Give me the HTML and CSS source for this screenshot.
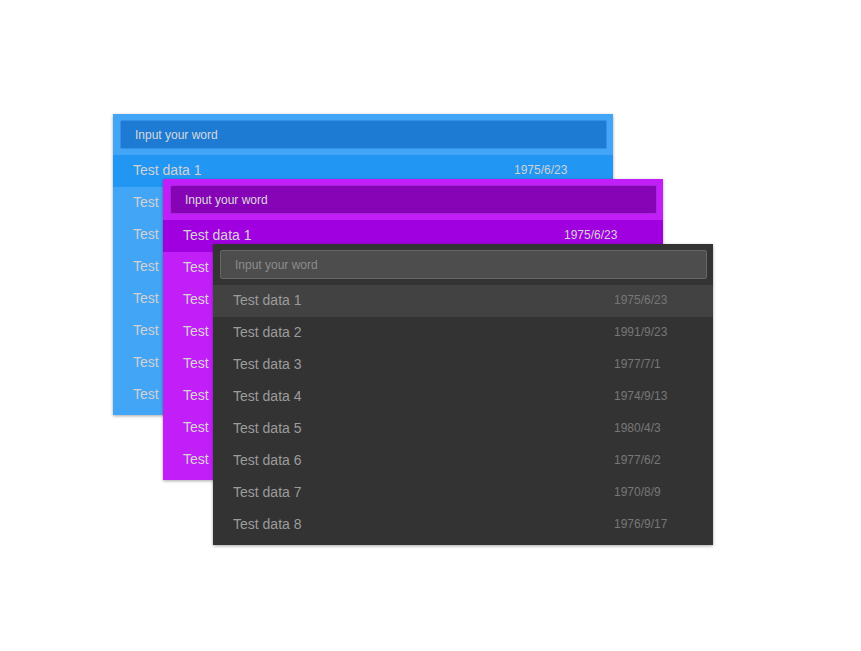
FILE: index.html
```html
<!DOCTYPE html>
<html lang="en">
<head>
    <meta charset="UTF-8">
    <meta name="viewport" content="width=device-width, initial-scale=1.0">
    <title>Search List Themes</title>
    <link rel="stylesheet" href="styles.css">
</head>
<body>
    <div class="stage">
        <!-- blue theme -->
        <div class="panel theme-blue pos-1">
            <div class="panel-head">
                <input type="text" class="search" placeholder="Input your word">
            </div>
            <ul class="list">
                <li class="active"><span>Test data 1</span><span class="date">1975/6/23</span></li>
                <li><span>Test data 2</span><span class="date">1991/9/23</span></li>
                <li><span>Test data 3</span><span class="date">1977/7/1</span></li>
                <li><span>Test data 4</span><span class="date">1974/9/13</span></li>
                <li><span>Test data 5</span><span class="date">1980/4/3</span></li>
                <li><span>Test data 6</span><span class="date">1977/6/2</span></li>
                <li><span>Test data 7</span><span class="date">1970/8/9</span></li>
                <li><span>Test data 8</span><span class="date">1976/9/17</span></li>
            </ul>
        </div>

        <!-- purple theme -->
        <div class="panel theme-purple pos-2">
            <div class="panel-head">
                <input type="text" class="search" placeholder="Input your word">
            </div>
            <ul class="list">
                <li class="active"><span>Test data 1</span><span class="date">1975/6/23</span></li>
                <li><span>Test data 2</span><span class="date">1991/9/23</span></li>
                <li><span>Test data 3</span><span class="date">1977/7/1</span></li>
                <li><span>Test data 4</span><span class="date">1974/9/13</span></li>
                <li><span>Test data 5</span><span class="date">1980/4/3</span></li>
                <li><span>Test data 6</span><span class="date">1977/6/2</span></li>
                <li><span>Test data 7</span><span class="date">1970/8/9</span></li>
                <li><span>Test data 8</span><span class="date">1976/9/17</span></li>
            </ul>
        </div>

        <!-- dark theme -->
        <div class="panel theme-dark pos-3">
            <div class="panel-head">
                <input type="text" class="search" placeholder="Input your word">
            </div>
            <ul class="list">
                <li class="active"><span>Test data 1</span><span class="date">1975/6/23</span></li>
                <li><span>Test data 2</span><span class="date">1991/9/23</span></li>
                <li><span>Test data 3</span><span class="date">1977/7/1</span></li>
                <li><span>Test data 4</span><span class="date">1974/9/13</span></li>
                <li><span>Test data 5</span><span class="date">1980/4/3</span></li>
                <li><span>Test data 6</span><span class="date">1977/6/2</span></li>
                <li><span>Test data 7</span><span class="date">1970/8/9</span></li>
                <li><span>Test data 8</span><span class="date">1976/9/17</span></li>
            </ul>
        </div>
    </div>
</body>
</html>
```

FILE: styles.css
```css
body {
    font-family: "Liberation Sans", Arial, sans-serif;
    background-color: #fff;
    margin: 0;
}
.stage {
    position: relative;
    width: 861px;
    height: 651px;
}
.panel {
    position: absolute;
    width: 500px;
    box-shadow: 0 1px 3px rgba(0, 0, 0, 0.35);
}
.pos-1 { left: 113px; top: 114px; }
.pos-2 { left: 163px; top: 179px; }
.pos-3 { left: 213px; top: 244px; }

.panel-head {
    padding: 6px 6px 6px 7px;
}
.search {
    display: block;
    box-sizing: border-box;
    width: 100%;
    height: 29px;
    padding: 0 14px;
    font-family: inherit;
    font-size: 12px;
    border: 1px solid;
    border-radius: 2px;
    outline: none;
}
.list {
    list-style: none;
    margin: 0;
    padding: 0 0 4px;
}
.list li {
    display: grid;
    grid-template-columns: 381px 1fr;
    height: 30px;
    line-height: 30px;
    padding: 0 0 2px 20px;
    font-size: 14px;
}
.list .date {
    font-size: 12px;
}

/* blue */
.theme-blue {
    background-color: #42a5f5;
    color: #d2d2d2;
}
.theme-blue .search {
    background-color: #1e7bd4;
    border-color: #3590e6;
    color: #ddd;
}
.theme-blue .search::placeholder {
    color: #d8d8d8;
}
.theme-blue li.active {
    background-color: #2196f3;
}

/* purple */
.theme-purple {
    background-color: #c21ff8;
    color: #d4d4d4;
}
.theme-purple .search {
    background-color: #8603b6;
    border-color: #a627d8;
    color: #ddd;
}
.theme-purple .search::placeholder {
    color: #dadada;
}
.theme-purple li.active {
    background-color: #a000e0;
}

/* dark */
.theme-dark {
    background-color: #333;
    color: #9c9c9c;
}
.theme-dark .search {
    background-color: #4d4d4d;
    border-color: #666;
    color: #999;
}
.theme-dark .search::placeholder {
    color: #8c8c8c;
}
.theme-dark li.active {
    background-color: #424242;
}
.theme-dark .date {
    color: #777;
}
```
